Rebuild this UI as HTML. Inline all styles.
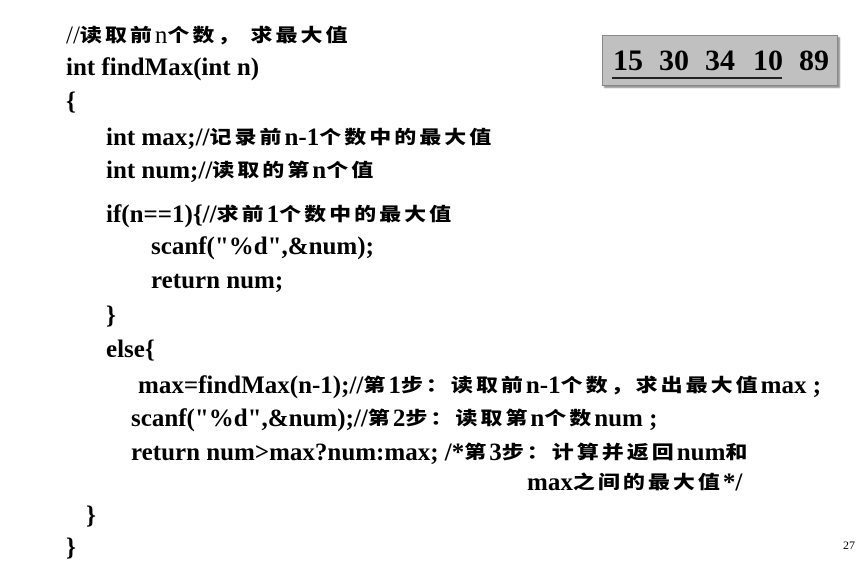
<!DOCTYPE html>
<html><head><meta charset="utf-8"><style>
html,body{margin:0;padding:0;background:#fff;width:857px;height:561px;overflow:hidden;position:relative}
.l{position:absolute;white-space:nowrap;font-family:"Liberation Serif","Noto Serif CJK SC",serif;font-weight:bold;font-size:25px;line-height:26px;color:#000}
.c{display:inline-block;transform:scaleY(0.82);font-family:"Noto Sans CJK SC","WenQuanYi Zen Hei",sans-serif;font-weight:900;font-size:22px;letter-spacing:3px}
.box{position:absolute;left:602px;top:35px;width:234px;height:49px;background:#c0c0c0;border:1px solid #888;box-shadow:2px 2px 1px #999;}
.box span{position:absolute;font-family:"Liberation Serif",serif;font-weight:bold;font-size:30px;top:8px;line-height:34px}
.ul{position:absolute;left:612px;top:77px;width:170px;height:2px;background:#222}
</style></head><body>
<div class="l" style="left:66px;top:21px"><span style="font-weight:normal">//</span><span class="c">读取前</span><span style="font-weight:normal">n</span><span class="c">个数， 求最大值</span></div>
<div class="l" style="left:66px;top:55px">int findMax(int n)</div>
<div class="l" style="left:66px;top:89px">{</div>
<div class="l" style="left:106px;top:123px">int max;//<span class="c">记录前</span>n-1<span class="c">个数中的最大值</span></div>
<div class="l" style="left:106px;top:156px">int num;//<span class="c">读取的第</span>n<span class="c">个值</span></div>
<div class="l" style="left:106px;top:200px">if(n==1){//<span class="c">求前</span>1<span class="c">个数中的最大值</span></div>
<div class="l" style="left:151px;top:234px">scanf("%d",&amp;num);</div>
<div class="l" style="left:151px;top:268px">return num;</div>
<div class="l" style="left:106px;top:303px">}</div>
<div class="l" style="left:106px;top:337px">else{</div>
<div class="l" style="left:138px;top:371px">max=findMax(n-1);//<span class="c">第</span>1<span class="c">步：读取前</span>n-1<span class="c">个数，求出最大值</span>max ;</div>
<div class="l" style="left:131px;top:404px">scanf("%d",&amp;num);//<span class="c">第</span>2<span class="c">步：读取第</span>n<span class="c">个数</span>num ;</div>
<div class="l" style="left:131px;top:438px">return num&gt;max?num:max; /*<span class="c">第</span>3<span class="c">步：计算并返回</span>num<span class="c">和</span></div>
<div class="l" style="left:527px;top:468px">max<span class="c">之间的最大值</span>*/</div>
<div class="l" style="left:86px;top:503px">}</div>
<div class="l" style="left:66px;top:535px">}</div>
<div class="box"><span style="left:10px">15</span><span style="left:56px">30</span><span style="left:102px">34</span><span style="left:150px">10</span><span style="left:196px">89</span></div>
<div class="ul"></div>
<div style="position:absolute;left:843px;top:538px;font-family:'Liberation Serif',serif;font-size:12px">27</div>
</body></html>
